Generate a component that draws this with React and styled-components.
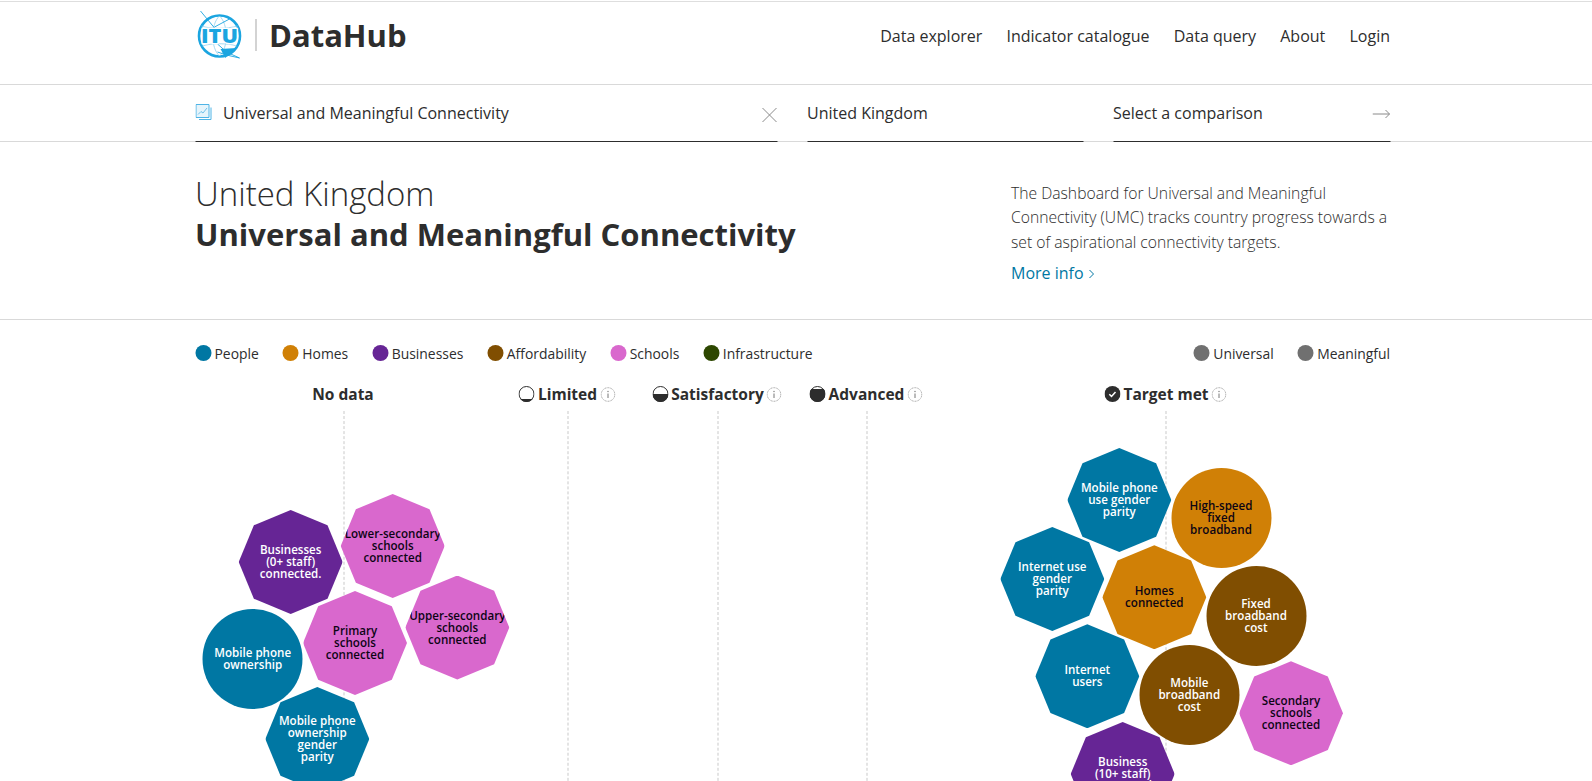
import React from "react";
import styled, { createGlobalStyle } from "styled-components";

const Global = createGlobalStyle`
  html, body { margin: 0; padding: 0; height: 100%; overflow: hidden; background: #fff; }
  body { font-family: "Open Sans", "Noto Sans", sans-serif; color: #2d2d2d; }
  * { box-sizing: border-box; }
`;

const Page = styled.div`
  height: 781px;
  overflow: hidden;
  padding-top: 1px;
`;
const Wrap = styled.div`
  width: 1195px;
  margin: 0 auto;
  transform: translateX(-3.5px);
`;
const HeaderBar = styled.header`
  height: 84px;
  border-top: 1px solid #dedede;
  border-bottom: 1px solid #d9d9d9;
`;
const HeaderInner = styled(Wrap)`
  display: flex;
  align-items: center;
  justify-content: space-between;
  height: 67px;
`;
const Brand = styled.div`
  display: flex;
  align-items: center;
  padding-bottom: 2px;
`;
const Divider = styled.span`
  width: 1px;
  height: 32px;
  background: #a8a8a8;
  margin: 0 13px 0 12px;
`;
const BrandName = styled.span`
  font-size: 31px;
  font-weight: 700;
`;
const Nav = styled.nav`
  display: flex;
  gap: 24.2px;
`;
const NavLink = styled.a`
  font-size: 16px;
  font-weight: 500;
`;
const SelectorBar = styled.div`
  height: 57px;
  border-bottom: 1px solid #d9d9d9;
`;
const SelectorInner = styled(Wrap)`
  display: grid;
  grid-template-columns: 582px 276px 277px;
  column-gap: 30px;
  height: 57px;
`;
const Field = styled.div`
  display: flex;
  align-items: center;
  gap: 11px;
  height: 57px;
  padding-bottom: 1px;
  border-bottom: 1px solid #2d2d2d;
  font-size: 16px;
  font-weight: 500;
`;
const FieldText = styled.span`
  flex: 1;
`;
const IconSlot = styled.span`
  display: flex;
  margin-top: ${(p) => p.$offset}px;
`;
const Hero = styled.section`
  height: 178px;
  border-bottom: 1px solid #d9d9d9;
`;
const HeroInner = styled(Wrap)`
  display: flex;
  justify-content: space-between;
  padding-top: 32px;
`;
const HeroTitle = styled.h1`
  margin: 0;
  font-size: 33px;
  line-height: 40px;
  font-weight: 300;
`;
const HeroStrong = styled.strong`
  display: block;
  font-size: 31px;
  font-weight: 700;
`;
const HeroSide = styled.div`
  width: 379px;
  padding-top: 7px;
`;
const HeroText = styled.p`
  margin: 0 0 8px;
  font-size: 15.7px;
  line-height: 24.4px;
  font-weight: 300;
`;
const MoreInfo = styled.a`
  color: #0077a3;
  font-size: 16px;
  font-weight: 500;
`;
const LegendRow = styled(Wrap)`
  display: flex;
  justify-content: space-between;
  align-items: center;
  height: 24px;
  margin-top: 21px;
`;
const LegendGroup = styled.div`
  display: flex;
  gap: ${(p) => p.$gap}px;
`;
const LegendItem = styled.span`
  display: flex;
  align-items: center;
  gap: 3.5px;
  font-size: 13.9px;
`;
const Dot = styled.i`
  width: 16px;
  height: 16px;
  border-radius: 50%;
  background: ${(p) => p.$color};
`;
const Columns = `
  display: grid;
  grid-template-columns: 296px 152px 148px 150px 449px;
`;
const HeadRow = styled(Wrap)`
  ${Columns}
  height: 24px;
  margin-top: 17px;
`;
const Head = styled.div`
  display: flex;
  align-items: center;
  justify-content: center;
  gap: 3px;
  font-size: 15.5px;
  font-weight: 700;
`;
const Canvas = styled(Wrap)`
  ${Columns}
  position: relative;
  height: 400px;
  margin-top: 5px;
`;
const Guide = styled.div`
  position: relative;
  &::before {
    content: "";
    position: absolute;
    top: 0;
    bottom: 0;
    left: 50%;
    border-left: 1px dashed #c9c9c9;
  }
`;
const Node = styled.div`
  position: absolute;
  width: ${(p) => (p.$round ? 100 : 104)}px;
  height: ${(p) => (p.$round ? 100 : 104)}px;
  display: flex;
  align-items: center;
  justify-content: center;
  text-align: center;
  font-size: 11.6px;
  line-height: 12px;
  font-weight: 600;
  white-space: pre-line;
  background: ${(p) => p.$color};
  color: ${(p) => (p.$dark ? "#0c0414" : "#fff")};
  border-radius: ${(p) => (p.$round ? "50%" : 0)};
  clip-path: ${(p) =>
    p.$round
      ? "none"
      : "polygon(50% 0, 85.4% 14.6%, 100% 50%, 85.4% 85.4%, 50% 100%, 14.6% 85.4%, 0 50%, 14.6% 14.6%)"};
`;

const C = {
  people: "#0077a3",
  homes: "#d08006",
  business: "#662595",
  afford: "#804e01",
  schools: "#d968cd",
  infra: "#2d4700",
};
const legend = [
  ["People", C.people],
  ["Homes", C.homes],
  ["Businesses", C.business],
  ["Affordability", C.afford],
  ["Schools", C.schools],
  ["Infrastructure", C.infra],
];
const nodes = [
  ["Businesses\n(0+ staff)\nconnected.", 290.7, 561, C.business],
  ["Lower-secondary\nschools\nconnected", 392.7, 545, C.schools, true],
  ["Upper-secondary\nschools\nconnected", 457.3, 626.5, C.schools, true],
  ["Primary\nschools\nconnected", 355, 642, C.schools, true],
  ["Mobile phone\nownership", 252.7, 658, C.people, false, true],
  ["Mobile phone\nownership\ngender\nparity", 317.3, 738, C.people],
  ["Mobile phone\nuse gender\nparity", 1119.3, 499, C.people],
  ["High-speed\nfixed\nbroadband", 1221, 517.3, C.homes, true, true],
  ["Internet use\ngender\nparity", 1052.3, 578, C.people],
  ["Homes\nconnected", 1154.3, 596.3, C.homes, true],
  ["Fixed\nbroadband\ncost", 1256, 615, C.afford, false, true],
  ["Internet\nusers", 1087.3, 675.3, C.people],
  ["Mobile\nbroadband\ncost", 1189.3, 693.7, C.afford, false, true],
  ["Secondary\nschools\nconnected", 1291, 712.3, C.schools, true],
  ["Business\n(10+ staff)\nconnected", 1122.7, 773, C.business],
];

const Logo = () => (
  <svg width="48" height="50" viewBox="0 0 48 50" fill="none">
    <circle cx="24" cy="26" r="20.5" stroke="#1ba5e0" strokeWidth="2.6" />
    <path d="M6 16c8 3 26 3 36 0M7 36c8-3 26-3 34 0M24 6c-9 8-9 32 0 40M24 6c9 8 9 32 0 40" stroke="#8fd0ef" strokeWidth="0.8" />
    <path d="M5 1l14 17M19 17l15-8M22 34l9 8 13 6-13-3-9-3" stroke="#1ba5e0" strokeWidth="0.9" />
    <path d="M25 39l16-1-8 6-3 4z" fill="#1ba5e0" />
    <text x="24" y="33" textAnchor="middle" textLength="37" lengthAdjust="spacingAndGlyphs" stroke="#fff" strokeWidth="2.5" paintOrder="stroke" fontFamily="Open Sans, sans-serif" fontSize="20" fontWeight="800" fill="#1ba5e0">ITU</text>
  </svg>
);
const ChartIcon = () => (
  <svg width="17" height="17" viewBox="0 0 17 17" fill="none" stroke="#4fb4e6">
    <path d="M.5 .5h13v13H.5z" fill="#e6f4fb" />
    <path d="M15.5 3.5v12h-12" />
    <path d="M2.5 10.5l3-3 2 1.5 4-5" strokeWidth=".8" />
  </svg>
);
const CloseIcon = () => (
  <svg width="16" height="16" viewBox="0 0 16 16" stroke="#8a8a8a" fill="none">
    <path d="M1 1l14 14M15 1L1 15" />
  </svg>
);
const ArrowIcon = () => (
  <svg width="18" height="10" viewBox="0 0 18 10" stroke="#8a8a8a" fill="none">
    <path d="M0 5h17M13 1l4 4-4 4" />
  </svg>
);
const ChevronMark = styled.svg`
  margin-left: 5px;
`;
const Chevron = () => (
  <ChevronMark width="6" height="10" viewBox="0 0 6 10" stroke="#0077a3" fill="none">
    <path d="M1 1l4 4-4 4" />
  </ChevronMark>
);
const Level = ({ fill }) => {
  const y = 16 - fill;
  return (
    <svg width="16" height="16" viewBox="0 0 16 16">
      <clipPath id={`lv${fill}`}><rect x="0" y={y} width="16" height="16" /></clipPath>
      <circle cx="8" cy="8" r="7.5" fill="#fff" stroke="#2d2d2d" />
      <circle cx="8" cy="8" r="8" fill="#2d2d2d" clipPath={`url(#lv${fill})`} />
    </svg>
  );
};
const Check = () => (
  <svg width="16" height="16" viewBox="0 0 16 16">
    <circle cx="8" cy="8" r="8" fill="#2d2d2d" />
    <path d="M4.8 8.2l2.2 2.2 4-4.400" stroke="#fff" strokeWidth="1.5" fill="none" />
  </svg>
);
const Info = () => (
  <svg width="15" height="15" viewBox="0 0 15 15" fill="none">
    <circle cx="7.5" cy="7.5" r="6.8" stroke="#8f8f8f" strokeWidth="0.8" strokeDasharray="1 .6" />
    <path d="M7.5 6.5v4.5" stroke="#777" />
    <circle cx="7.5" cy="4.5" r=".7" fill="#777" />
  </svg>
);

export default function App() {
  return (
    <Page>
      <Global />
      <HeaderBar>
        <HeaderInner>
          <Brand>
            <Logo />
            <Divider />
            <BrandName>DataHub</BrandName>
          </Brand>
          <Nav>
            {["Data explorer", "Indicator catalogue", "Data query", "About", "Login"].map((t) => (
              <NavLink key={t}>{t}</NavLink>
            ))}
          </Nav>
        </HeaderInner>
      </HeaderBar>
      <SelectorBar>
        <SelectorInner>
          <Field><ChartIcon /><FieldText>Universal and Meaningful Connectivity</FieldText><IconSlot $offset={5}><CloseIcon /></IconSlot></Field>
          <Field><FieldText>United Kingdom</FieldText></Field>
          <Field><FieldText>Select a comparison</FieldText><IconSlot $offset={3}><ArrowIcon /></IconSlot></Field>
        </SelectorInner>
      </SelectorBar>
      <Hero>
        <HeroInner>
          <HeroTitle>United Kingdom<HeroStrong>Universal and Meaningful Connectivity</HeroStrong></HeroTitle>
          <HeroSide>
            <HeroText>The Dashboard for Universal and Meaningful Connectivity (UMC) tracks country progress towards a set of aspirational connectivity targets.</HeroText>
            <MoreInfo>More info<Chevron /></MoreInfo>
          </HeroSide>
        </HeroInner>
      </Hero>
      <LegendRow>
        <LegendGroup $gap={24}>
          {legend.map(([t, c]) => (
            <LegendItem key={t}><Dot $color={c} />{t}</LegendItem>
          ))}
        </LegendGroup>
        <LegendGroup $gap={24}>
          <LegendItem><Dot $color="#707070" />Universal</LegendItem>
          <LegendItem><Dot $color="#707070" />Meaningful</LegendItem>
        </LegendGroup>
      </LegendRow>
      <HeadRow>
        <Head>No data</Head>
        <Head><Level fill={3} />Limited<Info /></Head>
        <Head><Level fill={8} />Satisfactory<Info /></Head>
        <Head><Level fill={13} />Advanced<Info /></Head>
        <Head><Check />Target met<Info /></Head>
      </HeadRow>
      <Canvas>
        {[0, 1, 2, 3, 4].map((i) => <Guide key={i} />)}
        {nodes.map(([t, x, y, color, dark, round]) => (
          <Node
            key={t}
            $color={color}
            $dark={dark}
            $round={round}
            style={{ left: x - 195 - (round ? 50 : 52), top: y - 410 - (round ? 50 : 52) }}
          >
            {t}
          </Node>
        ))}
      </Canvas>
    </Page>
  );
}
